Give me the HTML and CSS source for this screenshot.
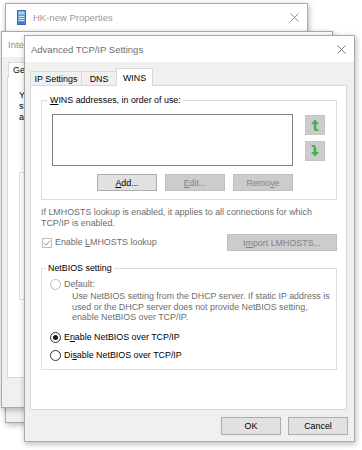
FILE: index.html
```html
<!DOCTYPE html>
<html>
<head>
<meta charset="utf-8">
<link rel="stylesheet" href="styles.css">
</head>
<body>
<div class="desk">
  <div class="win w1">
    <div class="titlebar">
      <svg class="appicon" width="9" height="15" viewBox="0 0 9 15">
        <rect x="0.5" y="0.5" width="8" height="14" fill="#5b9be0" stroke="#2f6fb8"/>
        <rect x="1.5" y="1.5" width="6" height="3" fill="#a9cdf3"/>
        <line x1="1.5" y1="6.5" x2="7.5" y2="6.5" stroke="#cfe3f8"/>
        <line x1="1.5" y1="8.5" x2="7.5" y2="8.5" stroke="#cfe3f8"/>
        <line x1="1.5" y1="10.5" x2="7.5" y2="10.5" stroke="#cfe3f8"/>
        <rect x="1.5" y="12" width="6" height="1.5" fill="#2f6fb8"/>
      </svg>
      <span class="title">HK-new Properties</span>
      <svg class="close" width="9" height="9" viewBox="0 0 9 9"><path d="M0.5 0.5 L8.5 8.5 M8.5 0.5 L0.5 8.5" stroke="#8a8a8a" stroke-width="1"/></svg>
    </div>
    <div class="wbody"></div>
  </div>

  <div class="win w2">
    <div class="titlebar">
      <span class="title clip2">Internet Protocol Version 4 (TCP/IPv4) Properties</span>
    </div>
    <div class="wbody w2body">
      <div class="tabs2"><span class="tab2"><span class="clip-tab">General</span></span></div>
      <div class="panel2">
        <p class="w2text">You can get IP settings assigned automatically if your network<br>supports this capability. Otherwise, you need to ask your network<br>administrator for the appropriate IP settings.</p>
        <div class="w2group"></div>
      </div>
    </div>
  </div>

  <div class="win w3">
    <div class="titlebar">
      <span class="title">Advanced TCP/IP Settings</span>
      <svg class="close" width="9" height="9" viewBox="0 0 9 9"><path d="M0.5 0.5 L8.5 8.5 M8.5 0.5 L0.5 8.5" stroke="#7a7a7a" stroke-width="1"/></svg>
    </div>
    <div class="body3">
      <div class="tabs">
        <span class="tab t-ip">IP Settings</span>
        <span class="tab t-dns">DNS</span>
        <span class="tab t-wins sel">WINS</span>
      </div>
      <div class="panel">
        <fieldset class="group wins">
          <legend><u>W</u>INS addresses, in order of use:</legend>
          <div class="listrow">
            <div class="listcol">
              <div class="listbox"></div>
              <div class="btnrow">
                <span class="btn"><u>A</u>dd...</span>
                <span class="btn dis"><u>E</u>dit...</span>
                <span class="btn dis">Remo<u>v</u>e</span>
              </div>
            </div>
            <div class="arrows">
              <span class="abtn">
                <svg width="10" height="12" viewBox="0 0 10 12">
                  <path d="M5 0.5 L9 5 L6.3 5 L6.3 8.5 Q6.3 10.5 8.5 10.5 L8.5 12 L5.8 12 Q3.7 12 3.7 9.5 L3.7 5 L1 5 Z" fill="#3fb54e"/>
                </svg>
              </span>
              <span class="abtn">
                <svg width="10" height="12" viewBox="0 0 10 12">
                  <path d="M5 11.5 L9 7 L6.3 7 L6.3 3.5 Q6.3 1 4.2 0 L1.5 0 L1.5 1.5 Q3.7 1.5 3.7 3.5 L3.7 7 L1 7 Z" fill="#3fb54e"/>
                </svg>
              </span>
            </div>
          </div>
        </fieldset>

        <p class="note">If LMHOSTS lookup is enabled, it applies to all connections for which<br>TCP/IP is enabled.</p>

        <div class="lmrow">
          <span class="check">
            <svg width="10" height="10" viewBox="0 0 10 10"><rect x="0.5" y="0.5" width="9" height="9" fill="#fff" stroke="#bcbcbc"/><path d="M2 5 L4 7.2 L8.2 2.5" fill="none" stroke="#9a9a9a" stroke-width="1"/></svg>
          </span>
          <span class="lbl dim">Enable <u>L</u>MHOSTS lookup</span>
          <span class="btn dis import">I<u>m</u>port LMHOSTS...</span>
        </div>

        <fieldset class="group netbios">
          <legend>NetBIOS setting</legend>
          <div class="radio-row">
            <span class="radio dis"></span>
            <span class="lbl dim">De<u>f</u>ault:</span>
          </div>
          <p class="desc">Use NetBIOS setting from the DHCP server. If static IP address is<br>used or the DHCP server does not provide NetBIOS setting,<br>enable NetBIOS over TCP/IP.</p>
          <div class="radio-row r-enable">
            <span class="radio on"></span>
            <span class="lbl">E<u>n</u>able NetBIOS over TCP/IP</span>
          </div>
          <div class="radio-row r-disable">
            <span class="radio"></span>
            <span class="lbl">Di<u>s</u>able NetBIOS over TCP/IP</span>
          </div>
        </fieldset>
      </div>
      <div class="footer">
        <span class="btn big">OK</span>
        <span class="btn big">Cancel</span>
      </div>
    </div>
  </div>
</div>
</body>
</html>
```
FILE: styles.css
```css
* { box-sizing: border-box; }
html, body { margin: 0; padding: 0; background: #ffffff; }
body {
  font-family: "Liberation Sans", Arial, sans-serif;
  font-size: 8.9px;
  color: #000;
  width: 362px;
  height: 450px;
  overflow: hidden;
}
u { text-decoration: underline; text-underline-offset: 1px; }
p { margin: 0; }

.desk { position: relative; width: 362px; height: 450px; }

.win {
  position: absolute;
  border: 1px solid #a9a9a9;
  background: #f0f0f0;
  box-shadow: 1px 2px 6px rgba(0, 0, 0, 0.28);
  display: flex;
  flex-direction: column;
}
.titlebar {
  background: #ffffff;
  display: flex;
  align-items: center;
  flex: none;
}
.title { font-size: 9.5px; white-space: nowrap; }
.close { margin-left: auto; }

/* window 1 (back) */
.w1 { left: 5px; top: 3px; width: 303px; height: 420px; z-index: 1; }
.w1 .titlebar { height: 27px; padding-left: 11px; padding-right: 8px; }
.w1 .appicon { margin-right: 7px; }
.w1 .title { color: #9a9a9a; }
.wbody { flex: 1; }

/* window 2 (middle) */
.w2 { left: 1px; top: 31px; width: 332px; height: 377px; z-index: 2; }
.w2 .titlebar { height: 25px; padding-left: 6px; }
.w2 .title { color: #8c8c8c; }
.clip2 { width: 17px; overflow: hidden; }
.w2body { padding: 5px 6px 29px 5px; display: flex; flex-direction: column; }
.tabs2 { height: 15px; display: flex; align-items: flex-end; padding-left: 1px; }
.tab2 {
  height: 16px; padding: 2px 0 0 4px; background: #fff; width: 40px;
  border: 1px solid #d9d9d9; border-bottom: none; margin-bottom: -1px;
  position: relative; z-index: 1;
}
.clip-tab { display: block; width: 12px; overflow: hidden; white-space: nowrap; }
.panel2 {
  flex: 1; background: #fff; border: 1px solid #d9d9d9;
  padding: 12px 10px 0 11px;
}
.w2text { line-height: 11px; white-space: nowrap; width: 6px; overflow: hidden; }
.w2group {
  margin-top: 49px; height: 128px; border: 1px solid #dcdcdc; width: 290px;
}

/* window 3 (front) */
.w3 { left: 24px; top: 35px; width: 331px; height: 407px; z-index: 3; }
.w3 .titlebar { height: 26px; padding-left: 6px; padding-right: 8px; }
.w3 .title { color: #6f6f6f; }
.body3 { flex: 1; padding: 6px 7px 0 5px; display: flex; flex-direction: column; }

.tabs { height: 17px; display: flex; align-items: flex-end; }
.tab {
  height: 14px; border: 1px solid #d9d9d9; border-bottom: none;
  background: #f0f0f0; display: flex; align-items: center; justify-content: center;
  padding-top: 1px; margin-right: -1px;
}
.t-ip { width: 52px; }
.t-dns { width: 36px; }
.t-wins { width: 37px; }
.tab.sel {
  height: 18px; background: #fff; margin-bottom: -1px; position: relative; z-index: 1;
  padding-top: 0;
}

.panel {
  width: 317px; height: 325px; background: #fff; border: 1px solid #d9d9d9;
  padding: 9px 9px 0 10px; display: flex; flex-direction: column;
}

.group { margin: 0; border: 1px solid #dcdcdc; min-width: 0; }
.group legend { padding: 0 2px; line-height: 11px; height: 11px; margin-left: -4px; }
.wins { padding: 8px 0 8px 10px; }
.listrow { display: flex; gap: 12px; }
.listcol { width: 241px; display: flex; flex-direction: column; }
.listbox { height: 52px; border: 1px solid #7f7f7f; background: #fff; }
.btnrow { margin-top: 8px; display: flex; justify-content: flex-end; gap: 8px; }
.btn {
  width: 60px; height: 17px; border: 1px solid #adadad; background: #e1e1e1;
  display: flex; align-items: center; justify-content: center; white-space: nowrap;
}
.btn.dis { background: #cccccc; border-color: #bfbfbf; color: #838383; }
.arrows { display: flex; flex-direction: column; gap: 6px; padding-top: 1px; }
.abtn {
  width: 20px; height: 20px; background: #cccccc; border: 1px solid #c4c4c4;
  display: flex; align-items: center; justify-content: center;
}

.note { margin-top: 7px; line-height: 10.5px; color: #6d6d6d; white-space: nowrap; }

.lmrow { margin-top: 6px; height: 17px; display: flex; align-items: center; }
.check { width: 10px; height: 10px; display: flex; margin-left: 1px; }
.lbl { margin-left: 3px; white-space: nowrap; line-height: 11px; }
.dim { color: #6d6d6d; }
.import { width: 110px; margin-left: auto; }

.netbios { margin-top: 12px; padding: 5px 0 8px 8px; }
.radio-row { display: flex; align-items: center; height: 11px; }
.radio {
  width: 11px; height: 11px; border-radius: 50%; border: 1px solid #333;
  background: #fff; flex: none; display: flex; align-items: center; justify-content: center;
}
.radio.dis { border-color: #bcbcbc; }
.radio.on::after { content: ""; width: 5px; height: 5px; border-radius: 50%; background: #1a1a1a; }
.desc { margin: 1px 0 0 22px; line-height: 10.5px; color: #6d6d6d; white-space: nowrap; }
.r-enable { margin-top: 9px; }
.r-disable { margin-top: 7px; }

.footer { margin-top: 7px; display: flex; justify-content: flex-end; gap: 7px; margin-right: -1px; }
.btn.big { height: 18px; }
```
